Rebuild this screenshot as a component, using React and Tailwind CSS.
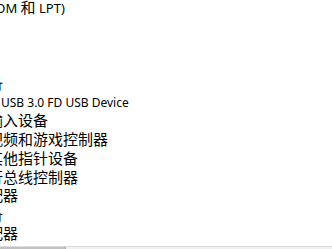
const rows = [
  { text: '端口 (COM 和 LPT)', indent: 'ml-[-50px]', latin: 'text-[13px]' },
  { text: '固件', indent: 'ml-[-57px]' },
  { text: '计算机', indent: 'ml-[-57px]' },
  { text: '监视器', indent: 'ml-[-57px]' },
  { text: '便携设备', indent: 'ml-[-57px]' },
  { text: 'USB 3.0 FD USB Device', indent: 'ml-[1px]', latin: 'text-[12px]' },
  { text: '人体学输入设备', indent: 'ml-[-57px]' },
  { text: '声音、视频和游戏控制器', indent: 'ml-[-57px]' },
  { text: '鼠标和其他指针设备', indent: 'ml-[-57px]' },
  { text: '通用串行总线控制器', indent: 'ml-[-57px]' },
  { text: '网络适配器', indent: 'ml-[-57px]' },
  { text: '系统设备', indent: 'ml-[-57px]' },
  { text: '显示适配器', indent: 'ml-[-57px]' },
];

// CJK glyphs sit larger than the Latin ones in the original UI font
function Label({ text, latin }) {
  const parts = text.split(/([\u3000-\u9fff\uff00-\uffef]+)/).filter(Boolean);
  return parts.map((p, i) =>
    /[\u3000-\u9fff\uff00-\uffef]/.test(p) ? (
      <span key={i} className="text-[15px]">{p}</span>
    ) : (
      <span key={i} className={latin || 'text-[12px]'}>{p}</span>
    )
  );
}

export default function App() {
  return (
    <div
      className="w-[332px] h-[249px] overflow-hidden bg-white flex flex-col text-black"
      style={{ fontFamily: '"Noto Sans", "Noto Sans CJK SC", sans-serif' }}
    >
      {/* tree rows, scrolled so the left part is hidden */}
      <div className="flex-1 overflow-hidden">
        <div className="mt-[-2px]">
          {rows.map((row, i) => (
            <div key={i} className="h-[18.8px] flex items-center whitespace-nowrap leading-none">
              <span className={row.indent}>
                <Label text={row.text} latin={row.latin} />
              </span>
            </div>
          ))}
        </div>
      </div>

      {/* horizontal scrollbar */}
      <div className="h-[3px] flex border-t border-[#dcdcdc] bg-[#f0f0f0]">
        <div className="w-[66px] bg-[#c2c2c2] border-r border-[#a8a8a8]"></div>
        <div className="flex-1"></div>
      </div>
    </div>
  );
}
